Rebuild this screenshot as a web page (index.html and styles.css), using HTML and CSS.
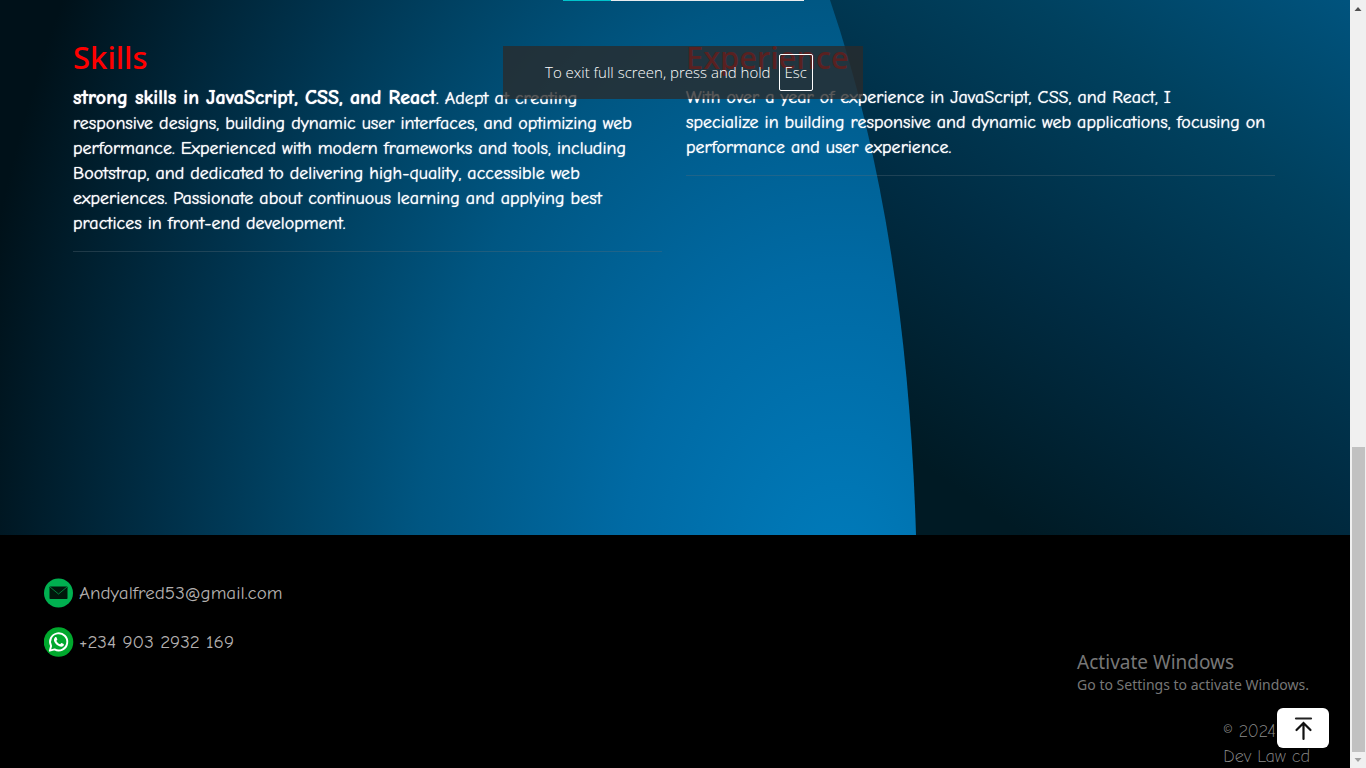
FILE: index.html
```
<!DOCTYPE html>
<html lang="en">
<head>
<meta charset="utf-8">
<title>Dev Law cd</title>
<link rel="stylesheet" href="styles.css">
</head>
<body>
<div class="page">
  <main class="about">
    <svg class="backdrop" viewBox="0 0 1350 535" preserveAspectRatio="none" aria-hidden="true">
      <defs>
        <radialGradient id="glow" gradientUnits="userSpaceOnUse" cx="0" cy="0" r="1" gradientTransform="translate(840 590) scale(880 1260)">
          <stop offset="0" stop-color="#007cbc"/>
          <stop offset="0.25" stop-color="#006aa4"/>
          <stop offset="0.48" stop-color="#005682"/>
          <stop offset="0.62" stop-color="#004466"/>
          <stop offset="0.75" stop-color="#00324c"/>
          <stop offset="0.92" stop-color="#001c2a"/>
          <stop offset="1" stop-color="#001119"/>
        </radialGradient>
        <linearGradient id="side" gradientUnits="userSpaceOnUse" x1="930" y1="470" x2="1290" y2="-50">
          <stop offset="0" stop-color="#001a24"/>
          <stop offset="0.35" stop-color="#002c43"/>
          <stop offset="0.7" stop-color="#00415f"/>
          <stop offset="1" stop-color="#00547f"/>
        </linearGradient>
      </defs>
      <rect width="1350" height="535" fill="url(#side)"/>
      <path d="M0 0H830Q907 226 916 535H0Z" fill="url(#glow)"/>
    </svg>
    <div class="progress"><div class="progress-bar"></div></div>
    <div class="columns">
      <section class="column">
        <h2>Skills</h2>
        <p><strong>strong skills in JavaScript, CSS, and React</strong>. Adept at creating responsive designs, building dynamic user interfaces, and optimizing web performance. Experienced with modern frameworks and tools, including Bootstrap, and dedicated to delivering high-quality, accessible web experiences. Passionate about continuous learning and applying best practices in front-end development.</p>
        <hr>
      </section>
      <section class="column">
        <h2>Experience</h2>
        <p>With over a year of experience in JavaScript, CSS, and React, I<br>specialize in building responsive and dynamic web applications, focusing on<br>performance and user experience.</p>
        <hr>
      </section>
    </div>
  </main>
  <footer class="footer">
    <ul class="contacts">
      <li><a href="mailto:Andyalfred53@gmail.com">
        <svg width="30" height="30" viewBox="0 0 30 30" aria-hidden="true"><circle cx="14.500" cy="15" r="14.500" fill="#00b050"/><rect x="5.500" y="8.500" width="18" height="12.500" rx="0.800" fill="#00170b"/><path d="M6 9l8.500 7L23 9" fill="none" stroke="#008a3e" stroke-width="0.900"/></svg>
        <span>Andyalfred53@gmail.com</span></a></li>
      <li><a href="tel:+2349032932169">
        <svg width="30" height="30" viewBox="0 0 30 30" aria-hidden="true"><circle cx="14.500" cy="15" r="14.800" fill="#00a82d"/><path d="M5.800 23.700l1.300-4.800a8.600 8.600 0 1 1 3.500 3.500z" fill="none" stroke="#fff" stroke-width="1.900" stroke-linejoin="round"/><path d="M10.900 10.400c.5-.6 1.300-.6 1.600 0l.8 1.900c.2.500-.7 1.200-.9 1.600.8 1.600 2 2.600 3.700 3.300.5-.3 1.100-1.400 1.600-1.200l1.900.9c.5.300.2 1.400-.3 2-1.500 1.400-3.800.7-5.800-.6-1.500-1.100-3.100-3-3.500-4.600-.2-1.300.2-2.500.9-3.300z" fill="#fff"/></svg>
        <span>+234 903 2932 169</span></a></li>
    </ul>
    <p class="copyright">© 2024<br>Dev Law cd</p>
  </footer>
</div>
<div class="scrollbar" aria-hidden="true">
  <svg class="arrow" width="16" height="16" viewBox="0 0 16 16"><path d="M4.500 11L8 7l3.500 4z" fill="#505050"/></svg>
  <div class="track"><div class="thumb"></div></div>
  <svg class="arrow" width="16" height="16" viewBox="0 0 16 16"><path d="M4.500 6L8 10l3.500-4z" fill="#a0a0a0"/></svg>
</div>
<div class="toast" role="status">To exit full screen, press and hold <kbd>Esc</kbd></div>
<aside class="watermark"><p class="watermark-title">Activate Windows</p><p>Go to Settings to activate Windows.</p></aside>
<button class="to-top" type="button" aria-label="Back to top">
  <svg width="24" height="28" viewBox="0 0 24 28" aria-hidden="true"><path d="M5 4.500h15" stroke="#222" stroke-width="2.200" stroke-linecap="round"/><path d="M12.500 25V9.500M5.500 16l7-7 7 7" fill="none" stroke="#111" stroke-width="2.200" stroke-linecap="round"/></svg>
</button>
</body>
</html>
```
FILE: styles.css
```
* { box-sizing: border-box; }
body {
  margin: 0;
  height: 100vh;
  display: flex;
  overflow: hidden;
  background: #000;
  color: #fff;
  font-family: "Comic Neue", "Comic Sans MS", "Open Sans", sans-serif;
  font-size: 19px;
  line-height: 25px;
}
h2, p, ul { margin: 0; padding: 0; }
.page {
  flex: 1;
  display: flex;
  flex-direction: column;
}
.about {
  position: relative;
  min-height: 535px;
}
.backdrop {
  position: absolute;
  inset: 0;
  width: 100%;
  height: 100%;
  z-index: -1;
}
.progress {
  width: 241px;
  height: 1px;
  margin: 0 auto;
  translate: 8px 0;
  background: #e9ecef;
}
.progress-bar { width: 20%; height: 100%; background: #00c4cc; }
.columns {
  display: grid;
  grid-template-columns: 1fr 1fr;
  gap: 24px;
  padding: 37px 75px 0 73px;
}
h2 {
  color: #f00;
  font-family: "Noto Sans", sans-serif;
  font-size: 31px;
  font-weight: 500;
  line-height: 38px;
  margin-bottom: 9px;
}
.column p {
  font-size: 18px;
  font-weight: 500;
  text-shadow: 0 0 1px #fff;
}
.column strong { font-size: 20px; font-weight: 700; }
hr {
  height: 1px;
  margin: 15px 0;
  border: 0;
  background: rgba(90, 110, 120, 0.35);
}
.footer {
  flex: 1;
  display: flex;
  justify-content: space-between;
  padding: 43px 27px 0 44px;
  background: #000;
}
.contacts { list-style: none; display: grid; gap: 19px; align-content: start; }
.contacts a {
  display: flex;
  align-items: center;
  gap: 5px;
  color: #b4b0b0;
  text-decoration: none;
}
.copyright {
  width: 100px;
  margin-top: 141px;
  color: #8c8c8c;
  font-size: 18px;
  font-weight: 300;
}
.scrollbar {
  width: 16px;
  display: flex;
  flex-direction: column;
  background: #f0f0f0;
}
.arrow { display: block; }
.track { flex: 1; display: flex; flex-direction: column; justify-content: flex-end; padding: 0 1px 0 2px; }
.thumb { height: 305px; background: #c1c1c1; }
.toast {
  position: absolute;
  top: 46px;
  left: 50%;
  width: 360px;
  height: 53px;
  transform: translateX(-50%);
  display: flex;
  align-items: center;
  justify-content: center;
  gap: 8px;
  padding-right: 8px;
  background: rgba(42, 42, 42, 0.78);
  font-family: "Open Sans", sans-serif;
  font-size: 15px;
  font-weight: 300;
}
.toast kbd {
  padding: 5px;
  border: 1px solid #fff;
  border-radius: 2px;
  font: inherit;
}
.watermark {
  position: absolute;
  right: 57px;
  bottom: 73px;
  color: #777;
  font-family: "Noto Sans", sans-serif;
  font-size: 14px;
  line-height: 20px;
}
.watermark-title { font-size: 19px; line-height: 25px; }
.to-top {
  position: absolute;
  right: 37px;
  bottom: 20px;
  width: 52px;
  height: 40px;
  display: grid;
  place-items: center;
  border: 0;
  border-radius: 6px;
  background: #fff;
}
```
